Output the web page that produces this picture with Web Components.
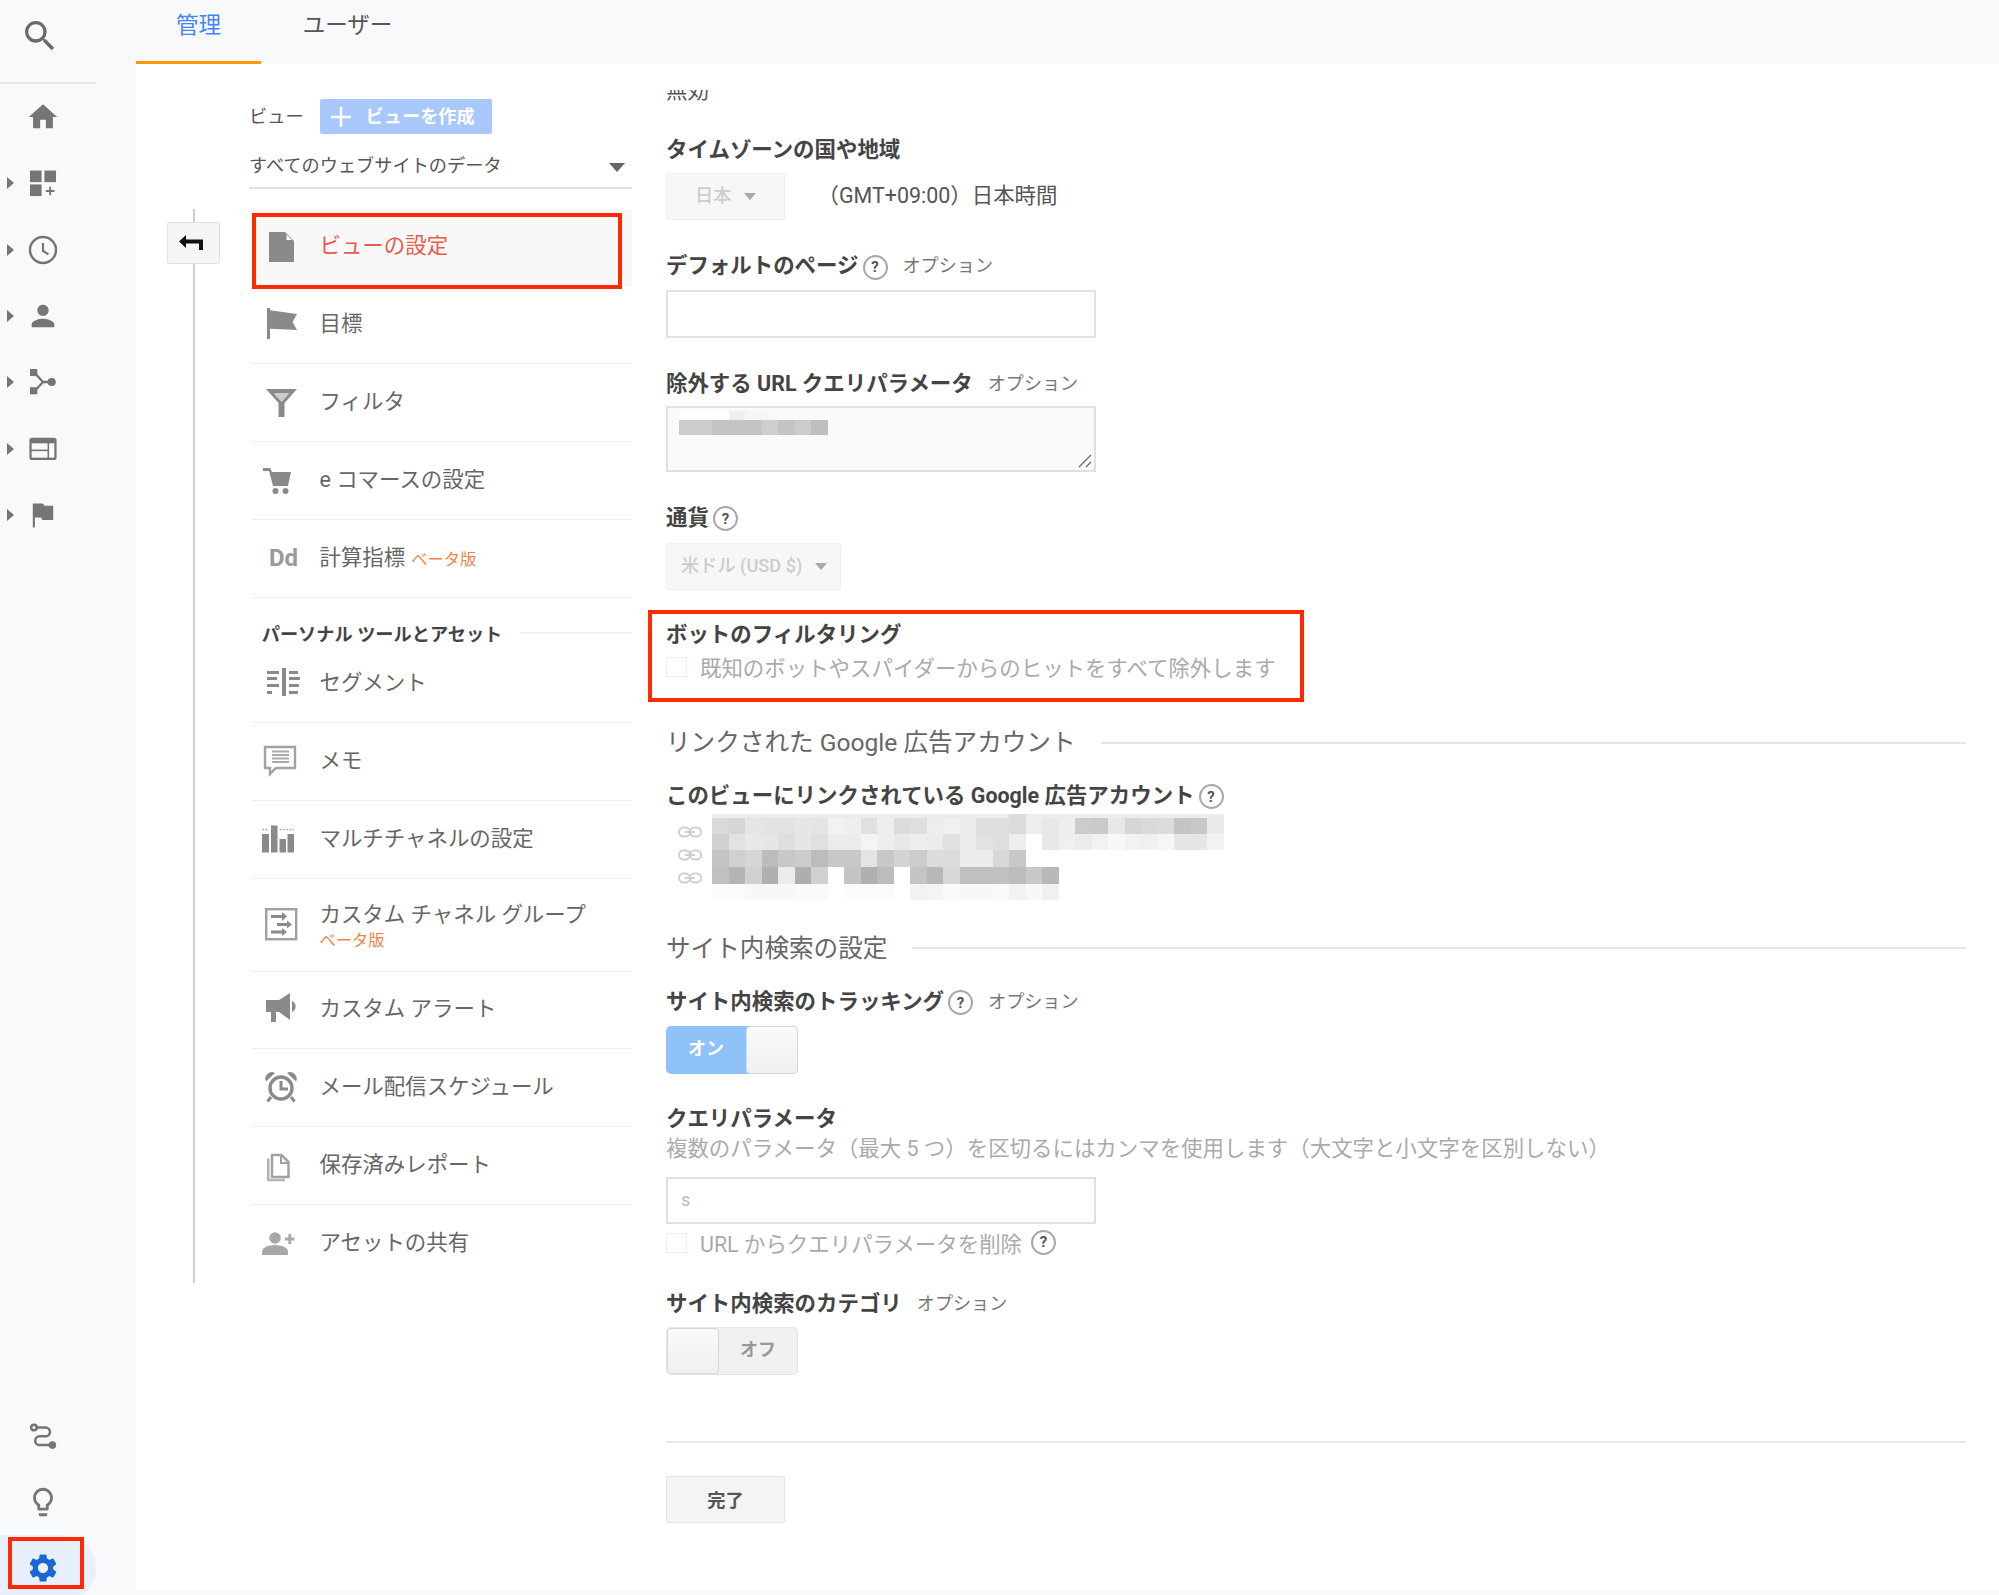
<!DOCTYPE html>
<html lang="ja">
<head>
<meta charset="UTF-8">
<title>ビューの設定</title>
<style>
  html, body { margin: 0; height: 100%; }
  body {
    height: 100vh; overflow: hidden; background: #f8f9fb; color: #555;
    font-family: Roboto, "Noto Sans CJK JP", sans-serif;
  }
</style>
</head>
<body>
<ga-app>
  <ga-sidebar slot="side">
    <ga-side-item icon="home"></ga-side-item>
    <ga-side-item icon="dash" arrow></ga-side-item>
    <ga-side-item icon="clock" arrow></ga-side-item>
    <ga-side-item icon="person" arrow></ga-side-item>
    <ga-side-item icon="share" arrow></ga-side-item>
    <ga-side-item icon="table" arrow></ga-side-item>
    <ga-side-item icon="flag" arrow></ga-side-item>
    <ga-side-item icon="path" slot="bottom"></ga-side-item>
    <ga-side-item icon="bulb" slot="bottom"></ga-side-item>
    <ga-side-item icon="gear" slot="bottom" active></ga-side-item>
  </ga-sidebar>
  <ga-tabs slot="tabs">
    <ga-tab active>管理</ga-tab>
    <ga-tab style="margin-left:24px">ユーザー</ga-tab>
  </ga-tabs>
  <ga-nav slot="nav">
    <ga-nav-item icon="doc" active>ビューの設定</ga-nav-item>
    <ga-nav-item icon="goal">目標</ga-nav-item>
    <ga-nav-item icon="filter">フィルタ</ga-nav-item>
    <ga-nav-item icon="cart">e コマースの設定</ga-nav-item>
    <ga-nav-item icon="dd">計算指標<ga-beta inline>ベータ版</ga-beta></ga-nav-item>
    <ga-nav-heading>パーソナル ツールとアセット</ga-nav-heading>
    <ga-nav-item icon="segment">セグメント</ga-nav-item>
    <ga-nav-item icon="memo">メモ</ga-nav-item>
    <ga-nav-item icon="chart">マルチチャネルの設定</ga-nav-item>
    <ga-nav-item icon="channel" tall>カスタム チャネル グループ<ga-beta>ベータ版</ga-beta></ga-nav-item>
    <ga-nav-item icon="mega">カスタム アラート</ga-nav-item>
    <ga-nav-item icon="alarm">メール配信スケジュール</ga-nav-item>
    <ga-nav-item icon="pages">保存済みレポート</ga-nav-item>
    <ga-nav-item icon="adduser" last>アセットの共有</ga-nav-item>
  </ga-nav>
  <ga-form slot="form">
    <ga-field style="margin-top:31.4px;--gap:9px" label="タイムゾーンの国や地域">
      <ga-row>
        <ga-select width="119" pad="28">日本</ga-select>
        <ga-plain>（GMT+09:00）日本時間</ga-plain>
      </ga-row>
    </ga-field>
    <ga-field style="margin-top:32px;--gap:10px" label="デフォルトのページ" help optional>
      <ga-input></ga-input>
    </ga-field>
    <ga-field style="margin-top:32px;--gap:8px" label="除外する URL クエリパラメータ" optional>
      <ga-textarea></ga-textarea>
    </ga-field>
    <ga-field style="margin-top:32px;--gap:11px" label="通貨" help>
      <ga-select width="175" pad="14">米ドル (USD $)</ga-select>
    </ga-field>
    <ga-highlight style="margin-top:20px">
      <ga-field style="--gap:3px" label="ボットのフィルタリング">
        <ga-check>既知のボットやスパイダーからのヒットをすべて除外します</ga-check>
      </ga-field>
    </ga-highlight>
    <ga-section style="margin-top:22.5px">リンクされた Google 広告アカウント</ga-section>
    <ga-field style="margin-top:25.5px;--gap:4px" label="このビューにリンクされている Google 広告アカウント" help>
      <ga-linked></ga-linked>
    </ga-field>
    <ga-section style="margin-top:30px">サイト内検索の設定</ga-section>
    <ga-field style="margin-top:26px;--gap:10px" label="サイト内検索のトラッキング" help optional>
      <ga-toggle on>オン</ga-toggle>
    </ga-field>
    <ga-field style="margin-top:31px;--gap:2px" label="クエリパラメータ">
      <ga-hint>複数のパラメータ（最大 5 つ）を区切るにはカンマを使用します（大文字と小文字を区別しない）</ga-hint>
      <ga-input style="margin-top:14px" value="s"></ga-input>
      <ga-check style="margin-top:4px">URL からクエリパラメータを削除<ga-help style="margin-left:9px"></ga-help></ga-check>
    </ga-field>
    <ga-field style="margin-top:33.5px;--gap:9px" label="サイト内検索のカテゴリ" optional>
      <ga-toggle>オフ</ga-toggle>
    </ga-field>
    <ga-rule style="margin-top:66.5px"></ga-rule>
    <ga-button style="margin-top:33px">完了</ga-button>
  </ga-form>
</ga-app>

<script>
  // sidebar icons are drawn on a 24 box, nav icons on a 40 box
  var SIDE_ICONS = {
    search: '<path d="M15.5 14h-.79l-.28-.27A6.47 6.47 0 0 0 16 9.5 6.5 6.5 0 1 0 9.5 16c1.61 0 3.09-.59 4.23-1.57l.27.28v.79l5 4.99L20.49 19l-4.99-5zm-6 0C7.01 14 5 11.99 5 9.5S7.01 5 9.5 5 14 7.01 14 9.5 11.99 14 9.5 14z"/>',
    home: '<path d="M10 20v-6h4v6h5v-8h3L12 3 2 12h3v8z"/>',
    dash: '<rect x="2.8" y="3.2" width="8.2" height="8.2"/><rect x="13" y="3.2" width="8.2" height="8.2"/><rect x="2.8" y="13" width="8.2" height="8.2"/><path d="M16.4 14.6h1.3v2.4h2.4v1.3h-2.4v2.4h-1.3v-2.4H14V17h2.4z"/>',
    clock: '<circle cx="12" cy="12" r="9.2" fill="none" stroke="currentColor" stroke-width="1.7"/><path d="M12 7v5.6l3.8 2.4" fill="none" stroke="currentColor" stroke-width="1.5"/>',
    person: '<path d="M12 12c2.21 0 4-1.79 4-4s-1.79-4-4-4-4 1.79-4 4 1.79 4 4 4zm0 2c-2.67 0-8 1.34-8 4v2h16v-2c0-2.66-5.33-4-8-4z"/>',
    share: '<rect x="2.8" y="2.8" width="5.2" height="5"/><rect x="2.8" y="15.7" width="5.2" height="5"/><circle cx="18.1" cy="12" r="2.9"/><path d="M6.5 6l5.5 6-5.5 6M12 12h5" fill="none" stroke="currentColor" stroke-width="1.6"/>',
    table: '<rect x="2.4" y="4" width="19.2" height="15.8" rx="1.8"/><g fill="#f8f9fb"><rect x="4" y="8" width="11.2" height="4.4"/><rect x="4" y="13.5" width="11.2" height="4.6"/><rect x="16.3" y="8" width="3.7" height="10.1"/></g>',
    flag: '<path d="M4.8 3.8H12l1 1.6h6.2v10.2h-7.6l-1-1.8H6.3v7H4.8z"/>',
    path: '<g transform="translate(0 1.3)"><g fill="none" stroke="currentColor" stroke-width="1.8"><circle cx="5.6" cy="5.4" r="2"/><path d="M7.6 5.4h6.2a3.1 3.1 0 0 1 0 6.2H9.6a3 3 0 0 0 0 6.2H17"/></g><circle cx="18.6" cy="17.8" r="2.7"/></g>',
    bulb: '<path d="M9 21c0 .55.45 1 1 1h4c.55 0 1-.45 1-1v-1H9v1zm3-19C8.14 2 5 5.14 5 9c0 2.38 1.19 4.47 3 5.74V17c0 .55.45 1 1 1h6c.55 0 1-.45 1-1v-2.26c1.81-1.27 3-3.36 3-5.74 0-3.86-3.14-7-7-7zm2.85 11.1l-.85.6V16h-4v-2.3l-.85-.6C7.8 12.16 7 10.63 7 9c0-2.76 2.24-5 5-5s5 2.24 5 5c0 1.63-.8 3.16-2.15 4.1z"/>',
    gear: '<path d="M19.14 12.94c.04-.3.06-.61.06-.94 0-.32-.02-.64-.07-.94l2.03-1.58c.18-.14.23-.41.12-.61l-1.92-3.32c-.12-.22-.37-.29-.59-.22l-2.39.96c-.5-.38-1.03-.7-1.62-.94l-.36-2.54c-.04-.24-.24-.41-.48-.41h-3.84c-.24 0-.43.17-.47.41l-.36 2.54c-.59.24-1.13.57-1.62.94l-2.39-.96c-.22-.08-.47 0-.59.22L2.74 8.87c-.12.21-.08.47.12.61l2.03 1.58c-.05.3-.09.63-.09.94s.02.64.07.94l-2.03 1.58c-.18.14-.23.41-.12.61l1.92 3.32c.12.22.37.29.59.22l2.39-.96c.5.38 1.03.7 1.62.94l.36 2.54c.05.24.24.41.48.41h3.84c.24 0 .44-.17.47-.41l.36-2.54c.59-.24 1.13-.56 1.62-.94l2.39.96c.22.08.47 0 .59-.22l1.92-3.32c.12-.22.07-.47-.12-.61l-2.01-1.58zM12 15.6c-1.98 0-3.6-1.62-3.6-3.6s1.62-3.6 3.6-3.6 3.6 1.62 3.6 3.6-1.62 3.6-3.6 3.6z"/>'
  };
  var NAV_ICONS = {
    doc: '<path d="M9 5h16l9 9v21H9z"/><path d="M26.5 7.5l5.5 5.5h-5.5z" fill="#f8f8f8"/>',
    goal: '<path d="M7 3h3v2.2l27 3.8-4.5 8 4.5 8-27-1.2V34H7z"/>',
    filter: '<path fill-rule="evenodd" d="M6 6h31L24.5 20v14h-6V20zM14 10.5l7.5 8 7.5-8z"/><path d="M14 10.5l7.5 8 7.5-8z" fill="#ccc"/>',
    cart: '<path d="M3 8h7l2 4h19l-3 14H13L9 11H3z"/><circle cx="15.5" cy="31" r="3"/><circle cx="25.5" cy="31" r="3"/>',
    segment: '<rect x="22" y="5" width="4" height="28"/><rect x="7" y="8" width="12" height="3"/><rect x="7" y="14" width="10" height="3"/><rect x="7" y="21" width="12" height="3"/><rect x="7" y="28" width="5" height="3"/><rect x="29" y="8" width="9" height="3"/><rect x="29" y="14" width="12" height="3"/><rect x="29" y="21" width="10" height="3"/><rect x="29" y="28" width="9" height="3"/>',
    memo: '<path d="M5 6h30v21H16l-6 6v-6H5z" fill="none" stroke="#a2a2a2" stroke-width="2.4"/><path d="M12 10.5h17M12 14h17M12 17.5h17M12 21h17" stroke="#aaa" stroke-width="2"/>',
    chart: '<rect x="2" y="15" width="7" height="18.5"/><rect x="11" y="6.5" width="6.5" height="27"/><rect x="19.5" y="20" width="6.5" height="13.5"/><rect x="27.5" y="15" width="6.5" height="18.5"/><path d="M2 10.5h7M19.5 10.5h14.5" stroke="#aaa" stroke-width="1.4" stroke-dasharray="2 1.4"/>',
    channel: '<rect x="6.2" y="4.2" width="30" height="30" fill="none" stroke="#a0a0a0" stroke-width="2.4"/><path d="M11 10.5h11v-3l5 4.5-5 4.5v-3H11zM17 18.5h10v-2.5l5 4-5 4V21.5H17zM11 26h11v-2.5l5 4-5 4v-2.5H11z" transform="translate(0 -.5)"/>',
    mega: '<path d="M6 10h13l11-7v27l-11-8h-3v10h-5V22H6z"/><path d="M32 11a6 6 0 0 1 0 11z"/>',
    alarm: '<circle cx="21" cy="20" r="11" fill="none" stroke="#8a8a8a" stroke-width="3.4"/><path d="M6 13.5a6.5 6.5 0 0 1 9-8.5zM36 13.5a6.5 6.5 0 0 0-9-8.5z"/><path d="M11 29l-3.5 4.5M31 29l3.5 4.5M21 13v8h7" fill="none" stroke="#8a8a8a" stroke-width="3"/>',
    pages: '<path d="M12 9h9.5l7 7v15H12z" fill="none" stroke="#a2a2a2" stroke-width="2.5"/><path d="M21 9v8h8" fill="none" stroke="#a2a2a2" stroke-width="2"/><path d="M8.2 12.5V34H25" fill="none" stroke="#b4b4b4" stroke-width="2.5"/>',
    adduser: '<circle cx="15" cy="14" r="5.8" fill="#a8a8a8"/><path d="M2 31v-3.5c0-4.5 8-6.5 13-6.5s13 2 13 6.5V31z" fill="#a8a8a8"/><path d="M25 15h9.5M29.75 10v10" stroke="#a8a8a8" stroke-width="2.8"/>'
  };

  // pixelated (redacted) text in the reference, one string per row, 2 hex digits a cell, ff = blank
  var LINKED_ROWS = [
    { h: 4, c: 'ec'.repeat(18) + 'dc' + 'ec'.repeat(12) },
    { h: 16, c: 'd9d6e6e3e2e6e4f2efe0eedcdfedf0ecdfdfdceee8eecccae8d6dadcc4c8ea' },
    { h: 16.5, c: 'd0e2e8e6dee6e0ececf4eee8eeece0ece2deeeffe8f0ecf2f8f2f0f6e6e6f2' },
    { h: 16.5, c: 'c4d0d6bcc8ccbcc8c8e4c8d4ccdcdcececd8c8' },
    { h: 17, c: 'c0b4d0b0ecaed0ffc4b0bcffc4b8d8c0c0c0bcc8b8' },
    { h: 16, c: 'fbfbf8f8f8fafafffbfbfbfff2f4faf8f8faf2f8f0' }
  ];
  var URL_ROWS = [
    { h: 9, c: 'ffffffeff5f8fafafa' },
    { h: 15, c: 'ccccc4c4c4cec4ccbe' }
  ];

  function def(name, css, html, init) {
    customElements.define(name, class extends HTMLElement {
      constructor() {
        super();
        var shadow = this.attachShadow({mode: 'open'});
        shadow.innerHTML = '<style>' + css + '</style>' + (typeof html == 'function' ? html(this) : html);
      }
      connectedCallback() { if (init) init(this, this.shadowRoot); }
    });
  }

  def('ga-app', `
    :host { display: flex; height: 100vh; overflow: hidden; }
    .main { flex: 1; min-width: 0; display: flex; flex-direction: column; }
    .body { height: 1526px; background: #fff; display: flex; padding-left: 31px; box-sizing: border-box; }
  `, `
    <slot name="side"></slot>
    <div class="main">
      <slot name="tabs"></slot>
      <div class="body"><slot name="nav"></slot><slot name="form"></slot></div>
    </div>
  `);

  def('ga-sidebar', `
    :host { display: flex; flex-direction: column; width: 136px; flex: none; height: 1595px; overflow: hidden; color: #757575; }
    .search { height: 82px; width: 96px; border-bottom: 2px solid #e4e5e7; display: flex; }
    svg { width: 40px; height: 40px; margin: 16px 0 0 20px; fill: #6b6b6b; }
    .bottom { margin-top: auto; margin-bottom: -6px; }
  `, `
    <div class="search"><svg viewBox="0 0 24 24">${SIDE_ICONS.search}</svg></div>
    <slot></slot>
    <div class="bottom"><slot name="bottom"></slot></div>
  `);

  def('ga-side-item', `
    :host { display: flex; align-items: center; height: 66.3px; width: 96px; padding-left: 7px; box-sizing: border-box; position: relative; }
    :host([active]) { background: #e8f0fe; border-radius: 0 33px 33px 0; color: #1967d2; }
    .arrow { width: 0; height: 0; border-left: 7px solid transparent; border-top: 6px solid transparent; border-bottom: 6px solid transparent; }
    :host([arrow]) .arrow { border-left-color: #757575; }
    svg { width: 34px; height: 34px; margin-left: 12px; fill: currentColor; }
    .mark { position: absolute; left: 8px; top: 2px; width: 76px; height: 52px; box-sizing: border-box; border: 4px solid #ff2a00; }
  `, function (el) {
    var mark = el.hasAttribute('active') ? '<div class="mark"></div>' : '';
    return '<div class="arrow"></div><svg viewBox="0 0 24 24">' + SIDE_ICONS[el.getAttribute('icon')] + '</svg>' + mark;
  });

  def('ga-tabs', `
    :host { display: flex; height: 64px; flex: none; }
  `, `<slot></slot>`);

  def('ga-tab', `
    :host { display: flex; justify-content: center; width: 125px; height: 64px; box-sizing: border-box; padding-top: 9px; font-size: 22.5px; line-height: 32px; color: #555; }
    :host([active]) { color: #4285f4; border-bottom: 3px solid #ff9800; }
  `, `<slot></slot>`);

  def('ga-nav', `
    :host { display: flex; flex: none; align-self: flex-start; width: 465px; }
    .rail { width: 53px; margin-top: 144.5px; margin-right: 29px; display: flex; flex-direction: column; align-items: center; }
    .line { width: 2px; background: #d0d0d0; }
    .line.top { height: 13.5px; }
    .line.rest { flex: 1; }
    .back { width: 53px; height: 42px; box-sizing: border-box; background: #f5f5f5; border: 1.5px solid #e2e2e2; border-radius: 2px; padding-right: 5px; display: flex; align-items: center; justify-content: center; }
    .pane { width: 383px; padding-top: 35px; }
    .head { display: flex; align-items: center; height: 35px; font-size: 18.2px; color: #555; }
    .head span { margin-bottom: 3px; }
    .create { margin-left: 16px; width: 172px; height: 35px; background: #a8c7fa; border-radius: 2px; color: #fff; font-weight: 700; display: flex; align-items: center; font-size: 18.2px; padding-bottom: 4px; box-sizing: border-box; }
    .create svg { margin: 4px 15px 0 11px; }
    .drop { margin-top: 16px; height: 37px; border-bottom: 2px solid #e2e2e2; display: flex; justify-content: space-between; font-size: 18.2px; line-height: 32px; color: #555; }
    .drop i { width: 0; height: 0; margin: 13px 7px 0 0; border: 8.5px solid transparent; border-top: 9.5px solid #666; border-bottom: 0; }
    .rows { margin: 19.5px 0 0 3px; }
  `, `
    <div class="rail">
      <div class="line top"></div>
      <div class="back"><svg width="26" height="18" viewBox="0 0 26 18"><path d="M8 1L1 7.5 8 14V9.5h13V16h4V5.5H8z" fill="#111"/></svg></div>
      <div class="line rest"></div>
    </div>
    <div class="pane">
      <div class="head"><span>ビュー</span><div class="create"><svg width="20" height="20" viewBox="0 0 20 20"><path d="M10 0v20M0 10h20" stroke="#fff" stroke-width="2.5"/></svg>ビューを作成</div></div>
      <div class="drop">すべてのウェブサイトのデータ<i></i></div>
      <div class="rows"><slot></slot></div>
    </div>
  `);

  def('ga-nav-item', `
    :host { display: flex; align-items: center; height: 77.85px; box-sizing: border-box; border-bottom: 1.5px solid #eee; font-size: 21.45px; color: #666; position: relative; width: 380px; }
    :host([tall]) { height: 93px; }
    :host([last]) { border-bottom-color: transparent; }
    :host([active]) { background: #f8f8f8; color: #ea5a4a; border-bottom: 0; }
    .ic { width: 67.5px; flex: none; height: 40px; padding-left: 8px; box-sizing: border-box; }
    svg { display: block; width: 40px; height: 40px; fill: #8a8a8a; }
    .dd { font: 700 24px/40px Roboto, sans-serif; color: #9a9a9a; padding-left: 9px; }
    .text { line-height: 26px; padding-bottom: 1px; }
    :host([active]) .text { padding-bottom: 3px; }
    :host([tall]) .text { padding-top: 4px; }
    .mark { position: absolute; left: 0; top: 4px; width: 370px; height: 76px; box-sizing: border-box; border: 4px solid #ff2a00; }
  `, function (el) {
    var name = el.getAttribute('icon');
    var icon = name == 'dd' ? '<div class="dd">Dd</div>' : '<svg viewBox="0 0 40 40">' + NAV_ICONS[name] + '</svg>';
    return '<div class="ic">' + icon + '</div><div class="text"><slot></slot></div>' + (el.hasAttribute('active') ? '<div class="mark"></div>' : '');
  });

  def('ga-beta', `
    :host { display: block; font-size: 16.3px; line-height: 20px; color: #f0854a; margin-top: 3px; }
    :host([inline]) { display: inline; margin: 0 0 0 6px; }
  `, `<slot></slot>`);

  def('ga-nav-heading', `
    :host { display: flex; align-items: center; height: 47.3px; padding: 24px 0 0 9.7px; box-sizing: border-box; width: 380px; font-size: 18.2px; font-weight: 700; color: #444; }
    .line { flex: 1; height: 2px; background: #f0f0f0; margin-left: 18px; }
  `, `<slot></slot><div class="line"></div>`);

  // the form is scrolled in the reference: its first line is cut by the top edge
  def('ga-form', `
    :host { display: block; margin: 25.5px 0 0 14px; padding-left: 20px; width: 1300px; height: 1500px; overflow: hidden; font-size: 21.45px; color: #555; }
    .cut { margin-top: -12.9px; height: 28px; line-height: 28px; color: #555; }
  `, `<div class="cut">無効</div><slot></slot>`);

  def('ga-field', `
    :host { display: block; }
    .label { display: flex; align-items: center; height: 28px; line-height: 28px; font-weight: 700; font-size: 21.45px; color: #444; }
    .opt { font-weight: 400; font-size: 18.1px; color: #777; margin-left: 15px; }
    ga-help { margin: 2px 0 0 4px; }
    .ctl { margin-top: var(--gap, 10px); }
  `, function (el) {
    return '<div class="label">' + el.getAttribute('label') +
      (el.hasAttribute('help') ? '<ga-help></ga-help>' : '') +
      (el.hasAttribute('optional') ? '<span class="opt">オプション</span>' : '') +
      '</div><div class="ctl"><slot></slot></div>';
  });

  def('ga-help', `
    :host { display: inline-flex; width: 25px; height: 25px; box-sizing: border-box; border: 2px solid #a8a8a8; border-radius: 50%; align-items: center; justify-content: center; font: 700 15px/20px Roboto, sans-serif; color: #555; flex: none; }
  `, `?`);

  def('ga-row', `
    :host { display: flex; align-items: center; gap: 32.5px; }
  `, `<slot></slot>`);

  def('ga-plain', `
    :host { display: block; font-size: 21.45px; color: #555; padding-bottom: 7px; }
  `, `<slot></slot>`);

  def('ga-select', `
    :host { display: flex; align-items: center; height: 47px; box-sizing: border-box; background: #f7f7f7; border: 1px solid #f0f0f0; border-radius: 2px; padding-bottom: 5px; font-size: 18.2px; color: #ccc; font-weight: 500; }
    i { width: 0; height: 0; margin: 5px 0 0 13px; border: 6px solid transparent; border-top: 7px solid #aaa; border-bottom: 0; }
  `, `<slot></slot><i></i>`, function (el) {
    el.style.width = el.getAttribute('width') + 'px';
    el.style.paddingLeft = el.getAttribute('pad') + 'px';
  });

  def('ga-input', `
    :host { display: block; width: 430px; height: 47.5px; box-sizing: border-box; border: 2px solid #e0e0e0; background: #fff; padding-left: 13px; line-height: 42px; font-size: 18px; color: #bbb; }
  `, function (el) { return el.getAttribute('value') || ''; });

  def('ga-pixels', `
    :host { display: block; }
    .r { display: flex; }
    .r div { width: 16.5px; height: 100%; flex: none; }
  `, function (el) {
    var rows = el.getAttribute('rows') == 'url' ? URL_ROWS : LINKED_ROWS;
    return rows.map(function (row) {
      var cells = row.c.match(/../g).map(function (h) {
        return '<div style="background:#' + h + h + h + '"></div>';
      }).join('');
      return '<div class="r" style="height:' + row.h + 'px">' + cells + '</div>';
    }).join('');
  });

  def('ga-textarea', `
    :host { display: block; position: relative; width: 430px; height: 66px; box-sizing: border-box; border: 2px solid #e0e0e0; background: #fafafa; padding: 3px 0 0 11px; }
    svg { position: absolute; right: 2px; bottom: 2px; }
  `, `
    <ga-pixels rows="url"></ga-pixels>
    <svg width="14" height="14" viewBox="0 0 14 14"><path d="M1 13L13 1M8 13l5-5" stroke="#666" stroke-width="1.2"/></svg>
  `);

  def('ga-highlight', `
    :host { display: block; width: 656px; height: 92px; box-sizing: border-box; margin-left: -18px; border: 4px solid #ff2a00; padding: 7.5px 0 0 14px; }
  `, `<slot></slot>`);

  def('ga-check', `
    :host { display: flex; align-items: center; height: 28px; font-size: 21.45px; color: #aaa; }
    .box { width: 21px; height: 20px; box-sizing: border-box; border: 1.5px solid #eee; margin: 2px 13px 0 0; flex: none; }
  `, `<div class="box"></div><slot></slot>`);

  def('ga-section', `
    :host { display: flex; align-items: center; height: 32px; font-size: 24.6px; color: #666; }
    .line { flex: 1; height: 2px; background: #e6e6e6; margin: 5px 0 0 25px; }
  `, `<slot></slot><div class="line"></div>`);

  def('ga-linked', `
    :host { display: flex; padding-left: 12px; height: 86px; }
    .links { width: 24px; margin-right: 10px; padding-top: 12px; flex: none; display: flex; flex-direction: column; gap: 11px; }
    svg { display: block; }
  `, function () {
    var link = '<svg width="24" height="12" viewBox="0 0 24 12"><g fill="none" stroke="#cfcfcf" stroke-width="2"><rect x="1" y="1.5" width="11" height="9" rx="4.5"/><rect x="12" y="1.5" width="11" height="9" rx="4.5"/><path d="M7 6h10"/></g></svg>';
    return '<div class="links">' + link + link + link + '</div><ga-pixels rows="linked"></ga-pixels>';
  });

  def('ga-toggle', `
    :host { display: flex; width: 132px; height: 48px; box-sizing: border-box; border-radius: 5px; overflow: hidden; font-size: 18px; font-weight: 700; }
    :host([on]) { background: #8ec2f9; color: #fff; }
    :host(:not([on])) { background: #f1f1f1; color: #999; flex-direction: row-reverse; border: 1.5px solid #e4e4e4; }
    .txt { flex: 1; display: flex; align-items: center; justify-content: center; padding-bottom: 5px; }
    .knob { width: 52px; box-sizing: border-box; background: linear-gradient(#fafafa, #f0f0f0); border: 1.5px solid #d8d8d8; border-radius: 4px; flex: none; }
  `, `<div class="txt"><slot></slot></div><div class="knob"></div>`);

  def('ga-hint', `
    :host { display: block; height: 28px; line-height: 28px; font-size: 21.45px; color: #aaa; white-space: nowrap; }
  `, `<slot></slot>`);

  def('ga-rule', `
    :host { display: block; height: 2px; background: #e6e6e6; }
  `, ``);

  def('ga-button', `
    :host { display: flex; align-items: center; justify-content: center; width: 119px; height: 47px; box-sizing: border-box; background: #f4f4f4; border: 1.5px solid #e2e2e2; border-radius: 2px; padding-bottom: 1px; font-size: 18.2px; font-weight: 700; color: #555; }
  `, `<slot></slot>`);
</script>
</body>
</html>
